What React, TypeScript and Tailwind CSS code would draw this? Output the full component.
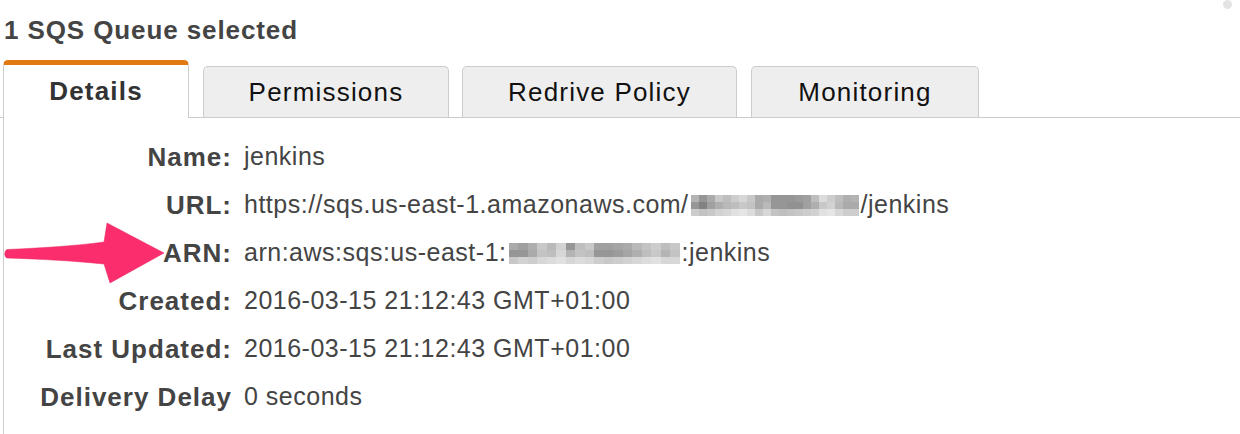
import React from "react";

const urlBlur = [
  [180,150,170,200,190,205,215,200,170,175,150,150,150,155,160,190,220,205,190,175,180],
  [150,130,160,175,185,190,200,195,170,185,150,150,145,145,160,175,200,210,185,170,170],
  [205,195,200,210,215,225,230,220,200,215,195,190,195,200,205,210,225,230,215,205,205],
];
const arnBlur = [
  [170,160,175,200,185,210,150,190,200,160,160,165,170,185,195,205,190,200],
  [150,150,170,195,190,215,180,195,190,150,150,155,165,175,190,200,180,195],
  [200,210,205,215,220,225,215,220,215,205,200,205,210,215,220,225,215,215],
];

function Blur({ data, cell }: { data: number[][]; cell: number }) {
  return (
    <span className="inline-flex flex-col align-middle mx-[2px]">
      {data.map((row, i) => (
        <span key={i} className="flex">
          {row.map((v, j) => (
            <span
              key={j}
              style={{ width: cell, height: 7, backgroundColor: `rgb(${v},${v},${v})` }}
            />
          ))}
        </span>
      ))}
    </span>
  );
}

const rows: [string, React.ReactNode][] = [
  ["Name:", "jenkins"],
  [
    "URL:",
    <span className="inline-flex items-center">
      https://sqs.us-east-1.amazonaws.com/
      <Blur data={urlBlur} cell={8} />
      /jenkins
    </span>,
  ],
  [
    "ARN:",
    <span className="inline-flex items-center">
      arn:aws:sqs:us-east-1:
      <Blur data={arnBlur} cell={9.5} />
      :jenkins
    </span>,
  ],
  ["Created:", "2016-03-15 21:12:43 GMT+01:00"],
  ["Last Updated:", "2016-03-15 21:12:43 GMT+01:00"],
  ["Delivery Delay", "0 seconds"],
];

export default function App() {
  return (
    <div
      className="relative w-[1240px] h-[434px] bg-white overflow-hidden"
      style={{ fontFamily: '"Liberation Sans", Arial, sans-serif' }}
    >
      <div className="absolute right-[8px] top-[0px] w-[9px] h-[9px] rounded-full bg-[#e4e4e4]" />
      <div className="h-[60px] pl-[4px] pt-[14px]">
        <h1 className="text-[26px] leading-[32px] font-bold text-[#444] tracking-[0.9px]">1 SQS Queue selected</h1>
      </div>
      <div className="flex items-end border-b border-[#cccccc] pl-[3px] text-[26px] tracking-[1.2px]">
        <div className="w-[186px] h-[58px] -mb-px bg-white border-x border-[#cccccc] border-t-[5px] border-t-[#e07a10] rounded-t-[5px] flex items-center justify-center font-bold text-[#333]">
          Details
        </div>
        <div className="w-[14px]" />
        <div className="w-[246px] h-[51px] bg-[#eeeeee] border-x border-t border-[#cccccc] rounded-t-[5px] flex items-center justify-center text-[#111] pt-[1px]">
          Permissions
        </div>
        <div className="w-[13px]" />
        <div className="w-[275px] h-[51px] bg-[#eeeeee] border-x border-t border-[#cccccc] rounded-t-[5px] flex items-center justify-center text-[#111] pt-[1px]">
          Redrive Policy
        </div>
        <div className="w-[14px]" />
        <div className="w-[228px] h-[51px] bg-[#eeeeee] border-x border-t border-[#cccccc] rounded-t-[5px] flex items-center justify-center text-[#111] pt-[1px]">
          Monitoring
        </div>
      </div>
      <div className="ml-[3px] border-l border-[#cccccc] h-[400px] pt-[15px]">
        <div className="grid grid-cols-[227px_1fr] gap-x-[13px] text-[25px] text-[#444]">
          {rows.map(([label, value], i) => (
            <React.Fragment key={i}>
              <div className="h-[48px] flex items-center justify-end font-bold text-[26px] tracking-[1px] mr-[-1px]">{label}</div>
              <div className="h-[48px] flex items-center tracking-[0.5px]">{value}</div>
            </React.Fragment>
          ))}
        </div>
      </div>
      <svg
        className="absolute left-0 top-[215px]"
        width="175"
        height="75"
        viewBox="0 215 175 75"
      >
        <path
          d="M7,249.5 C40,248 75,246 104,242 L107,223 L164,253 L110,283 L104,264 C75,261 40,259 7,258 C4,257 4,251 7,249.5 Z"
          fill="#fc2d6c"
          stroke="#e8245f"
          strokeWidth="0.5"
          strokeLinejoin="round"
        />
      </svg>
    </div>
  );
}
